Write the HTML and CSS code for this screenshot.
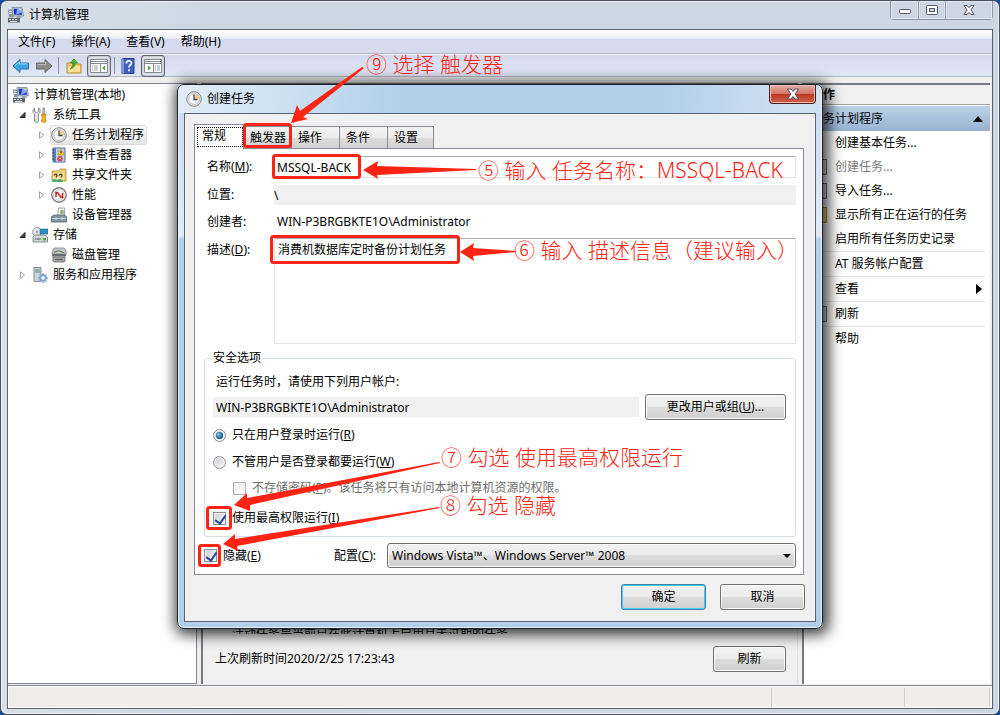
FILE: index.html
```html
<!DOCTYPE html>
<html lang="zh-CN">
<head>
  <meta charset="UTF-8" />
  <meta name="viewport" content="width=device-width, initial-scale=1.0"/>
  <title>计算机管理</title>
  <link rel="stylesheet" href="styles.css">
</head>
<body>

  <!-- shared icons -->
  <svg class="defs" width="0" height="0" aria-hidden="true">
    <symbol id="i-computer" viewBox="0 0 16 16">
      <path d="M4 .5h10l1.500 8.500H5z" fill="#c3ccd4" stroke="#7d8890" stroke-width=".8"/>
      <path d="M5.500 1.800h7.500l1 6H6.200z" fill="#1733c8"/>
      <path d="M9 1.800h4l.6 3.600L8 7.800z" fill="#7fa6f0"/>
      <path d="M10 1.800h3l.3 2z" fill="#e4eefc"/>
      <path d="M0 2.500h4.500l.5 8H1z" fill="#8b959c"/>
      <path d="M1 4h3v1H1zM1 6h3v1H1z" fill="#e9eef1"/>
      <path d="M9 9h4l1 2H8z" fill="#9aa4ab"/>
      <path d="M0 11h12v4.500H0z" fill="#5d6870"/>
      <path d="M1 12h2v1H1zM4 12h2v1H4zM7 12h2v1H7zM2 14h7v1H2z" fill="#dfe5e9"/>
    </symbol>
    <symbol id="i-clock" viewBox="0 0 16 16">
      <circle cx="8" cy="8" r="7.3" fill="#e4e4e4" stroke="#888"/>
      <circle cx="8" cy="8" r="5.4" fill="#f3f6fa" stroke="#aaa" stroke-width=".6"/>
      <path d="M8 8V2.8A5.2 5.2 0 0 1 13.2 8z" fill="#f3cf86"/>
      <path d="M8 3.5V8.5h3.6" fill="none" stroke="#3c4c60" stroke-width="1.3"/>
    </symbol>
    <symbol id="i-tri-open" viewBox="0 0 8 8"><path d="M6.500 1.500v5h-5z" fill="#444" stroke="#222"/></symbol>
    <symbol id="i-tri" viewBox="0 0 8 8"><path d="M2 .8L6 4 2 7.4z" fill="#fff" stroke="#a0a0a0"/></symbol>
  </svg>

  <div class="window">
    <header class="caption">
      <svg class="icon"><use href="#i-computer"/></svg>
      <h1>计算机管理</h1>
      <div class="win-controls">
        <button aria-label="最小化"><svg width="14" height="14" viewBox="0 0 14 14"><rect x="1.5" y="6.5" width="11" height="4" rx="1" fill="#fff" stroke="#54586a"/></svg></button>
        <button aria-label="最大化"><svg width="14" height="14" viewBox="0 0 14 14"><rect x="1.5" y="2.5" width="11" height="9" rx="1" fill="#fff" stroke="#54586a"/><rect x="4.5" y="5.5" width="5" height="3" fill="#ccd4e0" stroke="#54586a"/></svg></button>
        <button class="wide" aria-label="关闭"><svg width="14" height="14" viewBox="0 0 14 14"><path d="M2 2.500h3.200L7 4.700l1.800-2.200H12L9 7l3 4.500H8.800L7 9.300l-1.800 2.200H2L5 7z" fill="#fff" stroke="#54586a"/></svg></button>
      </div>
    </header>

    <div class="client">
      <nav class="menu-bar">
        <button>文件(F)</button>
        <button>操作(A)</button>
        <button>查看(V)</button>
        <button>帮助(H)</button>
      </nav>

      <div class="toolbar">
        <button aria-label="后退"><svg width="18" height="16" viewBox="0 0 18 16"><path d="M1 8l7-6.500V5h8.500v6H8v3.500z" fill="#3aa5e4" stroke="#2374b4"/><path d="M3 7.500L7.500 4v2h8" fill="none" stroke="#9ad8f8"/></svg></button>
        <button aria-label="前进"><svg width="18" height="16" viewBox="0 0 18 16"><path d="M17 8l-7-6.500V5H1.500v6H10v3.500z" fill="#8d8d8d" stroke="#686868"/><path d="M2.500 6.500h8V4" fill="none" stroke="#bbb"/></svg></button>
        <span class="sep"></span>
        <button aria-label="上移"><svg width="16" height="16" viewBox="0 0 16 16"><path d="M1 5h5l1 1h8v9H1z" fill="#f2ce6c" stroke="#b88f33"/><path d="M2 8h12v6H2z" fill="#fae29a"/><path d="M4 11c4-1 5-3 5-6h2.500L8 1 4.500 5H7c0 3-1 4-3 6z" fill="#4cb52c" stroke="#2e8418" stroke-width=".7"/></svg></button>
        <button class="pressed" aria-label="控制台树"><svg width="18" height="14" viewBox="0 0 18 14"><path d="M.5.500h17v13H.5z" fill="#fff" stroke="#838995"/><path d="M1 2.500h16M1 4.500h16M10.500 5v9" stroke="#838995"/><path d="M2 7h1M4 7h4M2 9h1M4 9h4M2 11h1M4 11h4" stroke="#8a9bb4"/><path d="M15 6.500v5L12 9z" fill="#4da83a"/></svg></button>
        <span class="sep"></span>
        <button aria-label="帮助"><svg width="16" height="16" viewBox="0 0 16 16"><path d="M2 .5h12v15H2z" fill="#3f60c0" stroke="#2a408c"/><path d="M2 .5h2v15H2z" fill="#7e98dc"/><path d="M6.300 5.400c0-3.400 5.200-3.300 5.200-.4 0 2-2.500 2-2.500 4.600M9 11.300v2" fill="none" stroke="#fff" stroke-width="1.700"/></svg></button>
        <button class="pressed" aria-label="操作窗格"><svg width="18" height="14" viewBox="0 0 18 14"><path d="M.5.500h17v13H.5z" fill="#fff" stroke="#838995"/><path d="M1 2.500h16M1 4.500h16M9.500 5v9" stroke="#838995"/><path d="M11 7h1M13 7h3M11 9h1M13 9h3M11 11h1M13 11h3" stroke="#8a9bb4"/><path d="M4 6.500v5L7 9z" fill="#4da83a"/></svg></button>
      </div>

      <div class="panes">
        <aside class="tree">
          <div class="node root"><svg class="icon"><use href="#i-computer"/></svg><span>计算机管理(本地)</span></div>
          <ul>
            <li>
              <div class="node"><svg class="tri"><use href="#i-tri-open"/></svg>
                <svg class="icon" viewBox="0 0 16 16"><path d="M2.500 1v3.500l2 1 2-1V1c2.500 1 2 5 0 6v7c0 2-4 2-4 0V7C.5 6 .5 2 2.500 1z" fill="#e2e2e2" stroke="#777" stroke-width=".8"/><path d="M11 .8h1.500l.3 6.200h-2z" fill="#c5c5c5" stroke="#777" stroke-width=".6"/><path d="M9.500 7.500h4.500l-.8 3 .8 4-2.200 1-2.300-1 .8-4z" fill="#f4b81e" stroke="#ad7a08" stroke-width=".8"/></svg>
                <span>系统工具</span></div>
              <ul>
                <li class="node"><svg class="tri"><use href="#i-tri"/></svg><div class="item selected"><svg class="icon"><use href="#i-clock"/></svg><span>任务计划程序</span></div></li>
                <li class="node"><svg class="tri"><use href="#i-tri"/></svg><div class="item"><svg class="icon" viewBox="0 0 16 16"><path d="M2 1h12v14H2z" fill="#c6d3ea" stroke="#4f6aa4"/><path d="M2 1h3v14H2z" fill="#5e7ab8"/><path d="M1 3h2M1 6h2M1 9h2M1 12h2" stroke="#444"/><path d="M6 4h2M6 12h1" stroke="#7088b8"/><path d="M10 2l3.500 6h-7z" fill="#ffd52e" stroke="#a88400" stroke-width=".6"/><path d="M10 4v2.500" stroke="#222"/><circle cx="9" cy="11.500" r="2.600" fill="#d42a2a"/><path d="M8 10.500l2 2M10 10.500l-2 2" stroke="#fff"/></svg><span>事件查看器</span></div></li>
                <li class="node"><svg class="tri"><use href="#i-tri"/></svg><div class="item"><svg class="icon" viewBox="0 0 16 16"><path d="M1 4h7l1-2h6v12H1z" fill="#f0cf74" stroke="#b18b36" stroke-width=".8"/><path d="M2 6h11v7H2z" fill="#f9e3a2"/><path d="M3 8.500c1-2 3-1.500 3 0l-1 2M8 8.500c1-2 3-1.500 3 0l-1 2" fill="none" stroke="#57431f" stroke-width="1.400"/><path d="M1 15c0-4 5-4 6 0z" fill="#3fab8c"/><path d="M6 15c0-4 5-4 6 0z" fill="#4a9f62"/></svg><span>共享文件夹</span></div></li>
                <li class="node"><svg class="tri"><use href="#i-tri"/></svg><div class="item"><svg class="icon" viewBox="0 0 16 16"><circle cx="8" cy="8" r="7.200" fill="#fff" stroke="#7f7f7f" stroke-width="1.400"/><circle cx="8" cy="8" r="5.300" fill="#fff" stroke="#c9c9c9"/><path d="M5 10V5.500l1.500 0L10 10.500h1.500V6" fill="none" stroke="#c81e1e" stroke-width="1.500"/></svg><span>性能</span></div></li>
                <li class="node"><span class="tri"></span><div class="item"><svg class="icon" viewBox="0 0 16 16"><path d="M7.500 1h6v8h-7z" fill="#eef2f4" stroke="#8b969c" stroke-width=".8"/><path d="M9.500 3h3v4h-3z" fill="#7fae68"/><path d="M.5 9.500l3-1.500h10l2 1.500V15H.5z" fill="#8395a0" stroke="#55636c" stroke-width=".8"/><path d="M1 11.500h14M5 10v3M11 10v3" stroke="#c8d4dc"/></svg><span>设备管理器</span></div></li>
              </ul>
            </li>
            <li>
              <div class="node"><svg class="tri"><use href="#i-tri-open"/></svg>
                <svg class="icon" viewBox="0 0 16 16"><circle cx="5" cy="5" r="4.400" fill="#e4e8ea" stroke="#8a9094" stroke-width=".8"/><circle cx="5" cy="5" r="1.200" fill="#8fa2ae"/><path d="M8 2h8v5H8z" fill="#2d8ec2" stroke="#1a6690" stroke-width=".6"/><path d="M1 10l1.500-2H13l2.500 2v5H1z" fill="#d3d7da" stroke="#6c7378" stroke-width=".8"/><path d="M3 12h6" stroke="#50565a"/><path d="M11 11h3v2.500h-3z" fill="#44b02c"/></svg>
                <span>存储</span></div>
              <ul>
                <li class="node"><span class="tri"></span><div class="item"><svg class="icon" viewBox="0 0 16 16"><path d="M2 3l1-2h10l2 2v4H1z" fill="#c7c9cb" stroke="#7c7e80" stroke-width=".8"/><path d="M1 7h14v2.500H1z" fill="#6c6e70"/><path d="M2 10h12v4l-1 1H3l-1-1z" fill="#a5a7a9" stroke="#67696b" stroke-width=".8"/><path d="M3 5.500c3-2 6-2 9 0M4 12.500h8" fill="none" stroke="#555759"/><path d="M11 5h2v1h-2z" fill="#49b430"/></svg><span>磁盘管理</span></div></li>
              </ul>
            </li>
            <li>
              <div class="node"><svg class="tri"><use href="#i-tri"/></svg>
                <svg class="icon" viewBox="0 0 16 16"><path d="M2 .5h7v14H2z" fill="#cbd6da" stroke="#7e8b91"/><path d="M3 3h5M3 5h5" stroke="#5a8a74"/><circle cx="11" cy="11" r="2.800" fill="#fff" stroke="#7ea4cc" stroke-width="2"/><path d="M11 6v2M11 14v2M6 11h2M14 11h2M7.500 7.500l1.300 1.300M13.200 13.200l1.300 1.300M14.500 7.500l-1.300 1.300M8.800 13.200l-1.300 1.300" stroke="#7ea4cc" stroke-width="1.300"/></svg>
                <span>服务和应用程序</span></div>
            </li>
          </ul>
        </aside>

        <main class="overview">
          <div class="summary"><p>活动任务是当前已在此计算机上启用且未过期的任务。</p></div>
          <footer class="refresh-row">
            <span>上次刷新时间2020/2/25 17:23:43</span>
            <button class="btn">刷新</button>
          </footer>
        </main>

        <aside class="actions">
          <h2>操作</h2>
          <h3><span>任务计划程序</span><svg width="10" height="6" viewBox="0 0 10 6"><path d="M0 6l5-6 5 6z"/></svg></h3>
          <ul>
            <li><a href="#">创建基本任务...</a></li>
            <li class="has-icon"><a href="#" class="disabled">创建任务...</a></li>
            <li class="has-icon"><a href="#">导入任务...</a></li>
            <li class="has-icon folder"><a href="#">显示所有正在运行的任务</a></li>
            <li><a href="#">启用所有任务历史记录</a></li>
            <li class="ruled"><a href="#">AT 服务帐户配置</a></li>
            <li class="ruled"><a href="#">查看</a><svg width="6" height="10" viewBox="0 0 6 10"><path d="M0 0l6 5-6 5z"/></svg></li>
            <li class="ruled has-icon"><a href="#">刷新</a></li>
            <li class="ruled"><a href="#">帮助</a></li>
          </ul>
        </aside>
      </div>

      <div class="status-bar"><span class="grow"></span><span class="mid"></span><span class="end"></span></div>
    </div>
  </div>

  <form class="dialog" onsubmit="return false">
    <header class="dialog-title">
      <svg class="icon"><use href="#i-clock"/></svg>
      <h2>创建任务</h2>
      <button type="button" class="close" aria-label="关闭"><svg width="14" height="12" viewBox="0 0 14 12"><path d="M1.500 1h3.300L7 3.500 9.200 1h3.300L9.200 6l3.300 5H9.200L7 8.500 4.800 11H1.500l3.300-5z" fill="#fff" stroke="#4b4f62"/></svg></button>
    </header>

    <div class="dialog-body">
      <div class="tabs" role="tablist">
        <button type="button" role="tab" class="active" aria-selected="true">常规</button>
        <button type="button" role="tab">触发器</button>
        <button type="button" role="tab">操作</button>
        <button type="button" role="tab">条件</button>
        <button type="button" role="tab">设置</button>
      </div>

      <div class="page">
        <div class="fields">
          <label for="name">名称(<u>M</u>):</label>
          <input type="text" id="name" class="field" value="MSSQL-BACK">
          <label for="location">位置:</label>
          <input type="text" id="location" class="readonly" value="\" readonly>
          <span>创建者:</span>
          <span class="author">WIN-P3BRGBKTE1O\Administrator</span>
          <label for="desc" class="desc-label">描述(<u>D</u>):</label>
          <textarea id="desc" class="field">消费机数据库定时备份计划任务</textarea>
        </div>

        <fieldset>
          <legend>安全选项</legend>
          <label for="account">运行任务时，请使用下列用户帐户:</label>
          <div class="account-row">
            <input type="text" id="account" class="readonly" value="WIN-P3BRGBKTE1O\Administrator" readonly>
            <button type="button" class="btn">更改用户或组(<u>U</u>)...</button>
          </div>
          <label class="option"><input type="radio" name="run" checked>只在用户登录时运行(<u>R</u>)</label>
          <label class="option"><input type="radio" name="run">不管用户是否登录都要运行(<u>W</u>)</label>
          <label class="option sub"><input type="checkbox" disabled>不存储密码(<u>P</u>)。该任务将只有访问本地计算机资源的权限。</label>
          <label class="option top"><input type="checkbox" checked>使用最高权限运行(<u>I</u>)</label>
        </fieldset>

        <div class="config-row">
          <label class="hide"><input type="checkbox" checked>隐藏(<u>E</u>)</label>
          <label for="config">配置(<u>C</u>):</label>
          <div class="select">
            <select id="config"><option>Windows Vista™、Windows Server™ 2008</option></select>
          </div>
        </div>
      </div>

      <div class="buttons">
        <button class="btn primary">确定</button>
        <button type="button" class="btn">取消</button>
      </div>
    </div>
  </form>

  <!-- step marks -->
  <div class="notes">
    <svg width="1000" height="715" viewBox="0 0 1000 715">
      <g fill="none" stroke="#ff2314" stroke-width="3">
        <rect x="244.500" y="124.500" width="46" height="22" rx="2"/>
        <rect x="273.500" y="155.500" width="86" height="22" rx="2"/>
        <rect x="271.500" y="236.500" width="187" height="26" rx="2"/>
        <rect x="207.500" y="507.500" width="23" height="21" rx="2"/>
        <rect x="199.500" y="545.500" width="20" height="20" rx="2"/>
      </g>
      <g fill="#ff2314">
        <path d="M291 123l6-18 3 6 62-44 2 1-61 49 5 2z"/>
        <path d="M363 170l15-9-1 5 99 3v1l-99 5 1 4z"/>
        <path d="M460 252l14-9-1 5 43 3v1l-43 4 1 5z"/>
        <path d="M234 505l13-12v5l192-36 1 1-190 42v6z"/>
        <path d="M223 544l12-10v5l204-32 1 1-203 38 1 5z"/>
      </g>
    </svg>
    <span class="n9">⑨ 选择 触发器</span>
    <span class="n5">⑤ 输入 任务名称<i>：</i>MSSQL-BACK</span>
    <span class="n6">⑥ 输入 描述信息（建议输入）</span>
    <span class="n7">⑦ 勾选 使用最高权限运行</span>
    <span class="n8">⑧ 勾选 隐藏</span>
  </div>

</body>
</html>
```

FILE: styles.css
```css
* {
  box-sizing: border-box;
  margin: 0;
  padding: 0;
}

body {
  position: relative;
  height: 100vh;
  overflow: hidden;
  background: #0d4fa0;
  color: #000;
  font: 12px/16px "Noto Sans", "Noto Sans CJK SC", sans-serif;
}

button, input, textarea, select {
  font: inherit;
  color: inherit;
}

button {
  background: none;
  border: none;
}

ul {
  list-style: none;
}

.defs {
  position: absolute;
}

.icon {
  width: 16px;
  height: 16px;
  flex: none;
}

/* main window */

.window {
  display: flex;
  flex-direction: column;
  height: 100vh;
  padding: 0 6px 5px;
  border: 1px solid #4b545e;
  border-radius: 7px;
  background: linear-gradient(90deg, #d8e1ea, #cdd8e4 20%, #cdd7e3);
  box-shadow: inset 0 0 0 1px #eef2f6;
}

.caption {
  display: flex;
  align-items: center;
  gap: 5px;
  height: 28px;
  flex: none;
  padding-left: 1px;
}

.caption h1 {
  font-size: 12px;
  font-weight: normal;
}

.win-controls {
  display: flex;
  align-self: flex-start;
  height: 19px;
  margin-left: auto;
  border: 1px solid #8b95a3;
  border-top: none;
  border-radius: 0 0 4px 4px;
}

.win-controls button {
  display: flex;
  align-items: center;
  justify-content: center;
  width: 27px;
  box-shadow: inset 0 0 0 1px #e2e8ef;
}

.win-controls button + button {
  border-left: 1px solid #8b95a3;
}

.win-controls .wide {
  width: 47px;
}

.client {
  display: flex;
  flex-direction: column;
  flex: 1;
  min-height: 0;
  border: 1px solid #59626c;
  background: #f0f0f0;
}

.menu-bar {
  display: flex;
  gap: 16px;
  height: 24px;
  flex: none;
  padding-left: 10px;
  border-bottom: 1px solid #b0b6c6;
  background: linear-gradient(#fff, #eef1f9 35%, #d4daed 40%, #d6dbec);
}

.toolbar {
  display: flex;
  align-items: center;
  height: 23px;
  flex: none;
  gap: 5px;
  padding-left: 4px;
  border-top: 1px solid #f6f8fc;
  border-bottom: 1px solid #b0b6c6;
  background: linear-gradient(#d3d9ec, #e2e7f6);
}

.toolbar button {
  display: flex;
}

.toolbar .sep {
  width: 1px;
  height: 17px;
  margin: 0 2px 0 0;
  background: #8c919e;
}

.toolbar .pressed {
  padding: 3px 2px;
  margin-right: -2px;
  border: 1px solid #5e6570;
  border-radius: 3px;
  background: #dde1ea;
  box-shadow: inset 0 0 2px #8c93a0;
}

.toolbar .pressed + .sep {
  margin-right: 0;
}

.panes {
  display: flex;
  flex: 1;
  min-height: 0;
  margin: 6px 2px 0 0;
  gap: 4px;
}

.tree {
  width: 189px;
  flex: none;
  padding-top: 1px;
  border: 1px solid #82878f;
  border-left: none;
  background: #fff;
}

.node {
  display: flex;
  align-items: center;
  gap: 5px;
  height: 20px;
  padding-left: 10px;
  white-space: nowrap;
}

.node.root {
  padding-left: 5px;
}

.node .tri {
  width: 9px;
  height: 8px;
  flex: none;
}

.tree ul ul {
  padding-left: 19px;
}

.item {
  display: flex;
  align-items: center;
  gap: 5px;
  height: 20px;
  padding-right: 2px;
}

.item.selected {
  height: 18px;
  border-radius: 2px;
  background: linear-gradient(#fafafa, #e6e6e6);
  box-shadow: 0 0 0 1px #d9d9d9;
}

.overview {
  display: flex;
  flex-direction: column;
  flex: 1;
  min-width: 0;
  border-left: 2px solid #777b80;
  border-top: 2px solid #777b80;
  border-right: 1px solid #e0e0e0;
}

.summary {
  display: flex;
  align-items: flex-end;
  flex: 1;
  padding-left: 29px;
}

.summary p {
  height: 8px;
  overflow: hidden;
}

.refresh-row {
  display: flex;
  align-items: center;
  justify-content: space-between;
  height: 50px;
  padding: 0 11px 0 12px;
}

.refresh-row .btn {
  width: 73px;
}

.actions {
  width: 188px;
  flex: none;
  border-left: 2px solid #777b80;
  border-top: 2px solid #777b80;
  background: #fff;
}

.actions h2 {
  height: 20px;
  padding-left: 7px;
  border-bottom: 1px solid #a0a0a0;
  background: #f0f0f0;
  font-size: 12px;
  line-height: 19px;
}

.actions h3 {
  display: flex;
  align-items: center;
  justify-content: space-between;
  height: 25px;
  margin-top: 1px;
  padding: 0 7px;
  background: linear-gradient(#bcd1e8, #98b3d2);
  font-size: 12px;
  font-weight: normal;
}

.actions li {
  position: relative;
  display: flex;
  align-items: center;
  justify-content: space-between;
  height: 24px;
  margin-right: 5px;
  padding-left: 31px;
}

.actions li svg {
  margin-right: 3px;
}

.actions .ruled {
  height: 25px;
  border-top: 1px solid #e3e3e3;
}

.actions .has-icon::before {
  content: "";
  position: absolute;
  left: 5px;
  width: 16px;
  height: 14px;
  border: 1px solid #777;
  background: #ddd;
}

.actions .folder::before {
  border-color: #b28a30;
  background: #f3d27c;
}

.actions a {
  color: #000;
  text-decoration: none;
}

.actions .disabled {
  color: #7b7b7b;
}

.status-bar {
  display: flex;
  height: 23px;
  flex: none;
  margin-top: 1px;
  border-top: 1px solid #82878f;
  background: #f1edec;
  box-shadow: inset 0 0 0 1px #fff;
}

.status-bar span {
  margin: 2px 0 1px;
  border-right: 1px solid #d3d1d0;
}

.status-bar .grow {
  flex: 1;
}

.status-bar .mid {
  width: 133px;
}

.status-bar .end {
  width: 85px;
  margin-right: 2px;
}

/* buttons */

.btn {
  height: 26px;
  border: 1px solid #707070;
  border-radius: 3px;
  background: linear-gradient(#f3f3f3, #ebebeb 50%, #dddddd 50%, #cfcfcf);
  box-shadow: inset 0 0 0 1px #fbfbfb;
  text-align: center;
}

.btn.primary {
  border-color: #3c7fb1;
  box-shadow: inset 0 0 0 1px #46d0f6;
}

/* create task dialog */

.dialog {
  position: absolute;
  top: 84px;
  left: 177px;
  right: 177px;
  padding: 0 6px 6px;
  border: 1px solid #1c222b;
  border-radius: 7px;
  background: linear-gradient(#c8dbef, #e0ebf6 150px, #b2cfea 155px);
  box-shadow: inset 0 0 0 1px #e6f0fa, 2px 2px 14px 4px rgba(0, 0, 0, 0.75);
}

.dialog-title {
  display: flex;
  align-items: center;
  gap: 5px;
  height: 28px;
  margin: 0 -5px;
  padding: 0 7px;
  background: linear-gradient(100deg, #e2ecf6, #cbdff1 18%, #b2cfea 35%, #b2cfea 75%, #cfe0f2 95%);
  border-radius: 6px 6px 0 0;
}

.dialog-title h2 {
  font-size: 12px;
  font-weight: normal;
}

.dialog-title .close {
  display: flex;
  align-items: center;
  justify-content: center;
  align-self: flex-start;
  width: 47px;
  height: 19px;
  margin: 0 -2px 0 auto;
  border: 1px solid #4f1d1d;
  border-top: none;
  border-radius: 0 0 4px 4px;
  background: linear-gradient(#e5aca2, #d27668 48%, #bd3822 50%, #cf6249);
  box-shadow: inset 0 0 0 1px #eec0b8;
}

.dialog-body {
  padding: 10px 11px 11px 9px;
  border: 1px solid #566473;
  background: #f0f0f0;
}

.tabs {
  display: flex;
  align-items: flex-end;
  height: 24px;
}

.tabs button {
  width: 49px;
  height: 22px;
  padding-left: 6px;
  border: 1px solid #898c95;
  border-bottom: none;
  margin-right: -1px;
  background: linear-gradient(#f3f3f3, #ebebeb 50%, #dddddd 50%, #d2d2d2);
  text-align: left;
  white-space: nowrap;
}

.tabs button:last-child {
  width: 47px;
}

.tabs .active {
  position: relative;
  width: 50px;
  height: 25px;
  margin-bottom: -1px;
  padding: 0 0 3px 7px;
  background: #fff;
}

.tabs .active::after {
  content: "";
  position: absolute;
  inset: 2px 0 2px 2px;
  border: 1px dotted #000;
}

.page {
  padding: 7px 7px 6px 9px;
  border: 1px solid #898c95;
  background: #fff;
}

.fields {
  display: grid;
  grid-template-columns: 67px 1fr;
  grid-template-rows: 22px 22px 20px 106px;
  row-gap: 6px;
  align-items: center;
  padding-left: 3px;
}

.field {
  width: 100%;
  height: 100%;
  padding: 0 2px;
  border: 1px solid #e2e3ea;
  border-top-color: #abadb3;
  background: #fff;
  outline: none;
  resize: none;
}

textarea.field {
  padding: 3px;
}

.readonly {
  width: 100%;
  height: 20px;
  border: none;
  background: #f0f0f0;
  outline: none;
}

.author {
  padding-left: 3px;
}

.desc-label {
  align-self: start;
  margin-top: 4px;
}

fieldset {
  display: flex;
  flex-direction: column;
  margin-top: 6px;
  padding: 8px 9px 9px 8px;
  border: 1px solid #d5dfe5;
  border-radius: 3px;
}

legend {
  padding: 0 2px;
  margin-left: -2px;
}

fieldset > label[for] {
  padding-left: 3px;
}

.account-row {
  display: flex;
  align-items: center;
  gap: 6px;
  margin: 4px 0 6px;
}

.account-row .readonly {
  flex: 1;
  padding-left: 3px;
}

.account-row .btn {
  width: 141px;
}

.option {
  display: flex;
  align-items: center;
  height: 18px;
  margin-bottom: 9px;
  white-space: nowrap;
}

.option.sub {
  margin: -1px 0 0;
  padding-left: 20px;
  color: #6d6d6d;
}

.option.top {
  margin: 12px 0 0;
}

input[type="radio"], input[type="checkbox"] {
  appearance: none;
  position: relative;
  width: 13px;
  height: 13px;
  flex: none;
  margin-right: 6px;
  border: 1px solid #8e8f8f;
  background: linear-gradient(135deg, #cbcfd5, #f6f6f6);
  box-shadow: inset 0 0 0 1px #f4f4f4;
}

input[type="radio"] {
  border-radius: 50%;
}

input[type="radio"]:checked::after {
  content: "";
  position: absolute;
  inset: 2px;
  border-radius: 50%;
  background: radial-gradient(circle at 40% 40%, #8fd6f4, #1c6c9c 50%, #0c2c4c);
}

input[type="checkbox"]:checked::after {
  content: "";
  position: absolute;
  left: 3px;
  top: 0;
  width: 5px;
  height: 9px;
  border: solid #31479e;
  border-width: 0 2px 2px 0;
  transform: rotate(35deg);
}

input[type="checkbox"]:disabled {
  border-color: #b1b1b1;
  background: #f5f5f5;
}

.config-row {
  display: flex;
  align-items: center;
  margin-top: 6px;
}

.config-row .hide {
  display: flex;
  align-items: center;
  width: 130px;
}

.select {
  position: relative;
  flex: 1;
  margin-left: 11px;
}

.select select {
  appearance: none;
  display: block;
  width: 100%;
  height: 25px;
  padding: 0 4px;
  border: 1px solid #707070;
  border-radius: 3px;
  background: linear-gradient(#f2f2f2, #ebebeb 50%, #dddddd 50%, #cfcfcf);
  box-shadow: inset 0 0 0 1px #fbfbfb;
}

.select::after {
  content: "";
  position: absolute;
  right: 5px;
  top: 11px;
  border: 4px solid transparent;
  border-top-color: #000;
  border-bottom: none;
}

.buttons {
  display: flex;
  justify-content: flex-end;
  gap: 14px;
  margin: 9px -1px 0 0;
}

.buttons .btn {
  width: 85px;
}

/* red step marks over the windows */

.notes {
  position: absolute;
  inset: 0;
  overflow: hidden;
  pointer-events: none;
  color: #ff2314;
  font-size: 21px;
  font-weight: 300;
  line-height: 28px;
  white-space: nowrap;
}

.notes svg {
  position: absolute;
  left: 0;
  top: 0;
}

.notes span {
  position: absolute;
}

.notes i {
  font-family: "Noto Sans CJK TC", sans-serif;
  font-style: normal;
}

.n9 {
  left: 366px;
  top: 50px;
}

.n5 {
  left: 478px;
  top: 155px;
}

.n6 {
  left: 514px;
  top: 236px;
}

.n7 {
  left: 441px;
  top: 443px;
}

.n8 {
  left: 440px;
  top: 491px;
}
```
